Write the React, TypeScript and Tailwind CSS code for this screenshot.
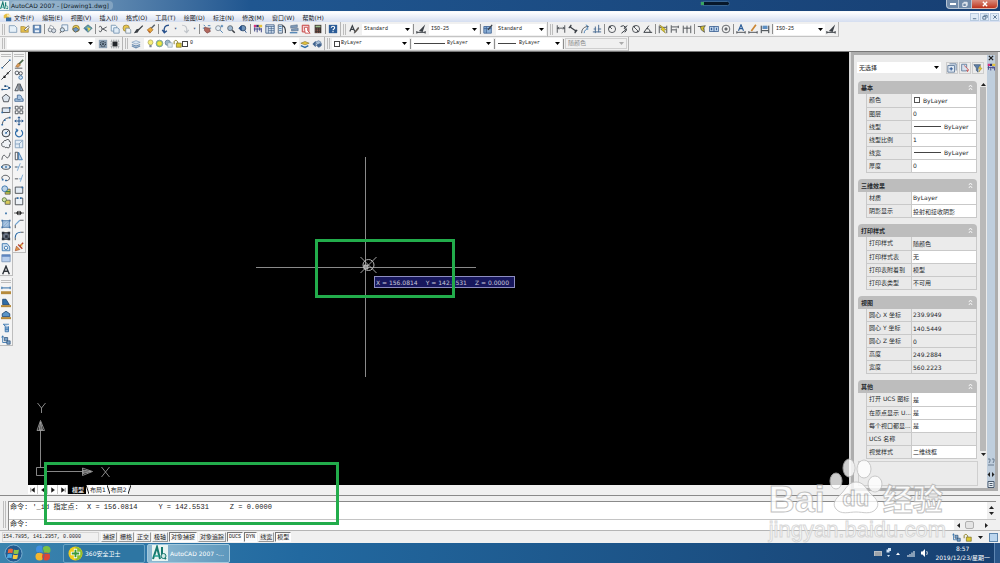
import React from 'react';

const ink = '#3a3f45';
const blue = '#2f6da8';

// All toolbar glyphs are drawn on a 12 x 12 grid
const icons: Record<string, React.ReactNode> = {
  new: <path d="M1.5 2h6.500l2.500 2.500V10h-9z" fill="#e6f0f8" stroke="#7a98b4" />,
  open: <><path d="M1 3h4l1 1h4v6H1z" fill="#e3bd4c" stroke="#9a7d30" strokeWidth=".7" /><path d="M5 7l5-5 1 2-4 4z" fill="#fff" stroke={ink} strokeWidth=".7" /></>,
  save: <><path d="M1.500 1.500h9v9h-9z" fill="#6d93c0" stroke="#41648f" /><path d="M3.500 2h5v3h-5zM3.500 7.500h5V10h-5z" fill="#eef4fa" /></>,
  print: <><circle cx="4" cy="7" r="2.500" fill="#e4e7ec" stroke="#68727f" /><circle cx="8" cy="8" r="2.500" fill="#d4dbe4" stroke="#68727f" /><path d="M4 1.500l4 2-1 3-4-2z" fill="#fff" stroke="#68727f" strokeWidth=".7" /></>,
  preview: <><path d="M3.500 1h7v7h-7z" fill="#eaf2fa" stroke="#6f8dab" /><circle cx="4" cy="7" r="2.500" fill="#cfe2f2" stroke={ink} strokeWidth=".8" /><path d="M2.500 9L1 11" stroke={ink} /></>,
  publish: <><circle cx="6" cy="5.500" r="4" fill="#e8c955" stroke="#7f6a24" strokeWidth=".8" /><path d="M2 6l3 4 5-3-4-3z" fill="#6f98c2" stroke={ink} strokeWidth=".6" /></>,
  dwf: <><path d="M1 5l5-4 5 4-5 5z" fill="#63a3a8" stroke="#37607a" strokeWidth=".8" /><path d="M5 4l4 1-2 4z" fill="#ead34f" /><path d="M2 5l3 1-1 2z" fill="#3565a5" /></>,
  cut: <path d="M10.500 3.500L4 7M10.500 8.500L4 5M4 7a1.400 1.400 0 1 1-2.500 1M4 5a1.400 1.400 0 1 0-2.500-1" fill="none" stroke={ink} />,
  copy: <><path d="M1.500 1.500h5l1.500 1.500v5.500H1.500z" fill="#eef5fb" stroke="#7191b0" /><path d="M4.500 4.500h4.500l2 1.500V11H4.500z" fill="#e0ecf6" stroke="#7191b0" /></>,
  paste: <><circle cx="5" cy="5" r="3.800" fill="#e9c64d" stroke="#8c7630" strokeWidth=".8" /><path d="M4.500 5h4l2 2v4h-6z" fill="#eef4f9" stroke="#65788b" strokeWidth=".8" /></>,
  brush: <path d="M10.500 2L5 7.500M5.500 6.500L4 9.500 1.500 10l2-3z" fill={ink} stroke={ink} strokeWidth="1.500" />,
  block: <><path d="M10.500 1L6 5.500" stroke="#57606b" strokeWidth="1.600" /><path d="M1.500 7l4-3 3 3-4 4z" fill="#e7a53a" stroke="#8c5b1d" strokeWidth=".7" /><path d="M3 8l2 2" stroke="#b53a2a" /></>,
  undo: <path d="M9.500 1.500C5 1.500 3 4 4 10M1.500 7l2.500 3.500L7 8" fill="none" stroke="#27508c" strokeWidth="1.600" />,
  redo: <path d="M2.500 1.500C7 1.500 9 4 8 10M10.500 7L8 10.500 5 8" fill="none" stroke="#bfc3c8" strokeWidth="1.300" />,
  pan: <><path d="M2 1l2 2M1 5h2M7 2h3M9 5h2" stroke={blue} /><path d="M3 4l6 1 1 4-4 2-3-3z" fill="#b1685e" stroke="#713c3c" strokeWidth=".7" /></>,
  zoomRt: <><circle cx="5" cy="5" r="3" fill="#e4edf5" stroke="#7b8794" /><path d="M7.500 7.500L10.500 10.500M8 2.500h3M9.500 1v3" stroke={blue} /></>,
  zoomWin: <><circle cx="5" cy="5" r="3" fill="#9fb9d3" stroke="#59646f" /><path d="M7.500 7.500l3 3" stroke={ink} strokeWidth="1.800" /></>,
  zoomPrev: <><circle cx="6" cy="5" r="3.300" fill="#6f93b9" stroke="#354c68" /><path d="M8 7.500l2 3M1 5l3-3v6z" fill="#27508c" stroke="#27508c" /></>,
  props: <><path d="M1 1h3v3H1z" fill="#d8317e" /><path d="M4 1h3v3H4z" fill="#2b2f6b" /><path d="M7 1h4v3H7z" fill="#e4c43c" /><path d="M2 4v5M5 5v5M8 4v4M10 5v5M1 6h9" stroke="#474c8a" strokeWidth="1.200" /></>,
  design: <><path d="M1 1h10v10H1z" fill="#dbe7f4" stroke="#3d5d86" /><path d="M1 3h10M4 3v8M7.500 3v8M4 5.500h7M4 8h7" stroke="#3d5d86" strokeWidth=".8" /></>,
  tools: <><path d="M1.500 1h5v10h-5z" fill="#e6eef6" stroke="#44546a" /><path d="M2.500 3h3M2.500 5.500h3M2.500 8h3" stroke={blue} /><path d="M6.500 2c3 1 4 4 3.500 9" fill="none" stroke={ink} strokeWidth="1.400" /></>,
  sheets: <><path d="M2 2l8-1v3L2 5zM3 6l8-1v3L3 8.500z" fill="#7f99b7" stroke="#4c6481" strokeWidth=".6" /><path d="M1 10.500h9" stroke={blue} strokeWidth="1.300" /></>,
  markup: <><path d="M1.500 1.500h8v8h-8z" fill="#f3d6d6" stroke="#c64343" strokeWidth="1.200" /><path d="M4 4h4v4l3 3H5z" fill="#fff" stroke="#c64343" /></>,
  calc: <><path d="M2 1h8v10H2z" fill="#3b3330" /><path d="M3 2h6v2H3z" fill="#9fbf8b" /><path d="M3 6h6M3 8h6M3 10h6" stroke="#b86c5a" strokeDasharray="1 1" /></>,
  help: <><path d="M1 1h10v10H1z" fill="#2b5c97" /><path d="M4 4.500C4 2 8 2 8 4.500 8 6 6 6 6 7.500M6 8.500v1.500" fill="none" stroke="#fff" strokeWidth="1.300" /></>,
  textStyle: <><path d="M1 9L4 2l3 7M2 6.500h4" fill="none" stroke={ink} strokeWidth="1.400" /><path d="M11 4l-4 5-1 2 2-1 4-5z" fill="#6b5a49" stroke={ink} strokeWidth=".6" /></>,
  dimStyle: <><path d="M1 10h10M1 8.500v3M11 8.500v3" stroke={ink} strokeWidth="1.200" /><path d="M11 .5L3.500 8.500 8 9.500z" fill={ink} /></>,
  tableStyle: <><path d="M1 3h9v8H1z" fill="#8fb2d8" stroke="#3f6394" /><path d="M1 5.500h9M4 3v8" stroke="#3f6394" /><path d="M11 1L6 7" stroke={ink} strokeWidth="1.500" /></>,
  dimLin: <path d="M1.500 1.500v9M10.500 1.500v9M2 5h8M3.500 3.500L2 5l1.500 1.500M8.500 3.500L10 5 8.500 6.500" fill="none" stroke={ink} />,
  dimAlign: <path d="M2.500 3.500l7 5M1 5l3-4M8 11l3-4M3 2l1 3M8 9l2-2" fill="none" stroke={ink} strokeWidth="1.400" />,
  dimArc: <><path d="M2 11C2 6 5 3 10 3" fill="none" stroke={ink} /><path d="M5 11c0-3 2-5 5-5M7 1l3 2-2 3" fill="none" stroke={blue} /></>,
  dimOrd: <path d="M1 9.500h10M2 6h3M7 6h4M4 3v8M8 1v9" fill="none" stroke="#4f6f95" strokeWidth="1.200" />,
  radius: <><circle cx="6" cy="6" r="4.300" fill="none" stroke={ink} /><path d="M6 6L3 3M3 3h2M3 3v2" stroke={ink} /></>,
  jogged: <path d="M2 3a4 4 0 1 1 5 7M10 2L6 5l2 2-5 4" fill="none" stroke={ink} strokeWidth="1.200" />,
  diameter: <><circle cx="6" cy="6" r="4.300" fill="none" stroke={ink} /><path d="M3 3l6 6M3 3h2M9 9H7" stroke={ink} /></>,
  angular: <path d="M11 10H1l6-8M4.500 5.500c3 0 4 2 4 4.500" fill="none" stroke={ink} strokeWidth="1.200" />,
  quick: <><path d="M1.500 2v9M10.500 2v9M2 4h8" stroke={ink} /><path d="M2 1l8 6-3 0 2 4-6-5 2 0z" fill="#e7d02c" stroke="#6e6210" strokeWidth=".5" /></>,
  baseline: <path d="M1.500 1.500v9M2 3.500h8M2 7h5M10 2v3M7.500 5.500v5" fill="none" stroke={ink} />,
  contin: <path d="M1.500 2v9M6 2v9M10.500 2v9M2 5h8" fill="none" stroke={ink} />,
  leader: <><path d="M1 3h4l4 3" fill="none" stroke={ink} /><path d="M4 3l6-1-2 3 1 5-4-3z" fill="#d7c02e" stroke={ink} strokeWidth=".8" /></>,
  tolerance: <><path d="M.5 3h11v6H.5z" fill="#bcd3ea" stroke="#3f6394" /><path d="M6 3v6M3 4.500v3M2 6h2M9 4.500v3" stroke="#27508c" /></>,
  center: <><circle cx="6" cy="6" r="4.600" fill="none" stroke={ink} strokeWidth=".9" /><path d="M6 4v4M4 6h4" stroke={ink} strokeWidth="1.200" /></>,
  dimEdit: <><path d="M1 10h10M1 8.500v3M11 8.500v3" stroke={ink} /><path d="M3 8l3-7 3 7M4.500 5.500h3" fill="none" stroke="#2b5c97" strokeWidth="1.400" /></>,
  dimText: <><path d="M1 10h10M1 8.500v3M11 8.500v3" stroke={ink} /><path d="M9.500 1L4 8.500" stroke="#cb8531" strokeWidth="2" /></>,
  dimUpd: <><path d="M1.500 2v9M10.500 2v9M2 8h8" stroke={ink} strokeWidth="1.200" /><path d="M3 2h6v4H3z" fill="#5e8fc2" /></>,
  gear: <><path d="M1 1h10v10H1z" fill="#8fa2b5" /><circle cx="6" cy="6" r="3" fill="none" stroke="#2d3a48" strokeWidth="1.500" strokeDasharray="1.200 .8" /><circle cx="6" cy="6" r="1.200" fill="#2d3a48" /></>,
  chip: <><path d="M3 3h6v6H3z" fill="#22262b" /><path d="M1.500 1.500h9v9h-9z" fill="none" stroke="#6c737b" strokeDasharray="1 1" /></>,
  layers: <><path d="M1 4l5-2 5 2-5 2z" fill="#dce8f4" stroke="#6e8fb3" strokeWidth=".7" /><path d="M1 6.500l5 2 5-2M1 8.500l5 2 5-2" fill="none" stroke="#6e8fb3" strokeWidth="1.400" /></>,
  layerCur: <><path d="M1 5l5-2 5 2-5 2z" fill="#e4c43c" stroke="#7f6a24" strokeWidth=".7" /><path d="M1 8l5 2 4-2" fill="none" stroke={blue} strokeWidth="1.800" /></>,
  layerPrev: <><path d="M4 4l4-2 3 2-4 3z" fill="#a9bfd6" stroke="#41648f" strokeWidth=".7" /><path d="M5 7l3 3 3-2V5M1 6l3-3v6z" fill="#41648f" stroke="#41648f" /></>,
  bulb: <><circle cx="6" cy="4.500" r="3.300" fill="#f7ee7a" stroke="#9b9440" strokeWidth=".8" /><path d="M4.500 8h3v3h-3z" fill="#7f8790" /></>,
  sun: <><circle cx="6" cy="6" r="4.500" fill="#a9c95a" stroke="#6f94a8" /><circle cx="6" cy="6" r="2.800" fill="#f5e33c" /></>,
  freeze: <><circle cx="5" cy="5" r="3.500" fill="#9cb7c8" stroke="#5d7c91" /><path d="M5 5h6v6H5z" fill="#dfe9ef" stroke="#7b95a6" strokeWidth=".7" /></>,
  lock: <><path d="M4.500 5.500h6.500v5.500H4.500z" fill="#dcc934" stroke="#6b6018" strokeWidth=".8" /><path d="M6.500 5.500C6.500 1 1.500 1 1.500 4v3" fill="none" stroke="#8b8024" strokeWidth="1.300" /></>,

  line: <><path d="M1.500 10.500l9-9" stroke={ink} /><path d="M.5 9.500h2v2h-2zM9.500.5h2v2h-2z" fill={blue} /></>,
  xline: <><path d="M.5 11.500l11-11" stroke={ink} strokeWidth="1.200" /><path d="M3 7h2.500v2.500H3zM7 3h2v2H7z" fill="#222" /></>,
  pline: <><path d="M1 9h6c3 0 3-4 0-4H5" fill="none" stroke={blue} strokeWidth="1.200" /><path d="M.5 8h2v2h-2zM4 4h2v2H4zM9 6h2v2H9z" fill="#24486f" /></>,
  polygon: <path d="M6 1.500l4.500 3.500-1.700 5.500H3.200L1.500 5z" fill="#dce4ec" stroke={ink} />,
  rect: <><path d="M1.500 3.500h9v5.500h-9z" fill="#dce7f3" stroke={ink} /><path d="M.5 8h2v2h-2zM9.500 2.500h2v2h-2z" fill={blue} /></>,
  arc: <><path d="M1.500 10.500C2 5 5 2.500 10.500 2" fill="none" stroke={ink} /><path d="M.5 9.500h2v2h-2zM3.500 4h2v2h-2zM9.500 1h2v2h-2z" fill={blue} /></>,
  circle: <><circle cx="6" cy="6" r="4.700" fill="#e6edf4" stroke={ink} strokeWidth="1.200" /><path d="M6 6l3-3" stroke={ink} /><path d="M5 5h2v2H5z" fill={blue} /></>,
  cloud: <path d="M3 4a2 2 0 0 1 3-2 2 2 0 0 1 4 1 2 2 0 0 1 0 4 2 2 0 0 1-3 3 2 2 0 0 1-3-1 2 2 0 0 1-3-2 2 2 0 0 1 2-3z" fill="#f1f4f7" stroke={ink} />,
  spline: <path d="M1 10.500C2 4 4 4 6 7s4 0 5-5" fill="none" stroke={ink} />,
  ellipse: <><ellipse cx="6" cy="6" rx="5" ry="2.800" fill="#dbe6f0" stroke={ink} /><path d="M5 5h2v2H5zM0 5h2v2H0zM10 5h2v2h-2z" fill={blue} /></>,
  ellArc: <><path d="M2 8C-1 4 4 2 7 3s5 4 1 6H5" fill="none" stroke={ink} /><path d="M1 7h2v2H1zM5 8h2v2H5z" fill={blue} /></>,
  insert: <><path d="M5 5h6v6H5z" fill="#d3c84b" stroke={ink} strokeWidth=".8" /><circle cx="4.500" cy="4.500" r="3.500" fill="#bcd3e6" stroke={blue} /><path d="M6 8h5" stroke="#3b7f46" strokeWidth="1.500" /></>,
  make: <><path d="M5 5h6v5H5z" fill="#d8c95a" stroke={ink} strokeWidth=".8" /><circle cx="4" cy="4.500" r="2.500" fill="#cfe0a0" stroke="#54743b" /></>,
  point: <path d="M5 5.500h2v2H5z" fill={blue} />,
  hatch: <><path d="M2 2h8v8H2z" fill="#a9c4e0" stroke="#4673a5" /><path d="M2 6l4-4M2 10l8-8M6 10l4-4" stroke="#86abd2" /><path d="M.5 1h2v2h-2zM9.500 1h2v2h-2zM.5 9h2v2h-2zM9.500 9h2v2h-2z" fill="#4673a5" /></>,
  gradient: <><path d="M2 2h8v8H2z" fill="#6c7789" stroke="#222" /><path d="M1 1h3v3H1zM8 1h3v3H8zM1 8h3v3H1zM8 8h3v3H8zM5 5h3v3H5z" fill="#272d38" /></>,
  region: <><path d="M1.500 2h6l3 4v4.500h-9z" fill="#cfe0ef" stroke={blue} /><circle cx="6" cy="7" r="2" fill="#fff" stroke={blue} /></>,
  table: <><path d="M1 2h10v8.500H1z" fill="#b6cdec" stroke="#7c96b8" /><path d="M1 2h10v2.500H1z" fill="#5d84bf" /></>,
  mtext: <path d="M2 11L6 1.500 10 11M3.500 7.500h5" fill="none" stroke="#30343a" strokeWidth="1.700" />,

  erase: <><path d="M11 1L5 7" stroke="#4e6a4a" strokeWidth="2" /><path d="M1 11h9" stroke={ink} /><path d="M2 9l3-4 3 2-3 3z" fill="#d99b56" stroke="#8b5424" strokeWidth=".6" /></>,
  dup: <><circle cx="3.500" cy="3.500" r="2.200" fill="#eef2f6" stroke={ink} /><circle cx="8" cy="4" r="2" fill="none" stroke={ink} /><circle cx="8" cy="9" r="2.200" fill="#cfe0ef" stroke={blue} /></>,
  mirror: <><path d="M5 2v8.500H1z" fill="#c6cfd9" stroke={ink} /><path d="M7 2v8.500h4z" fill="#8aa6c4" stroke={ink} /></>,
  offset: <path d="M1 10V7h3V2.500h3C9 3 9.500 5 9.500 7H11v3zM4 8h4" fill="#a9c4e0" stroke="#466a94" />,
  array: <path d="M1.500 1.500h3.500v3.500H1.500zM7 1.500h3.500v3.500H7zM1.500 7h3.500v3.500H1.500zM7 7h3.500v3.500H7z" fill="#fff" stroke={ink} />,
  move: <path d="M6 1v10M1 6h10M4.500 2.500L6 1l1.500 1.500M4.500 9.500L6 11l1.500-1.500M2.500 4.500L1 6l1.500 1.500M9.500 4.500L11 6 9.500 7.500" fill="none" stroke="#27568c" strokeWidth="1.200" />,
  rotate: <path d="M4 2.500a4.300 4.300 0 1 0 4.500.2M2 1l2.500 1.500L3 5" fill="none" stroke={blue} strokeWidth="1.400" />,
  scale: <path d="M1.500 1.500h9v9h-9zM1.500 6h5v4.500M6 6l4-4" fill="#e3edf6" stroke="#7f9dbb" />,
  stretch: <><path d="M1.500 1.500h3v9h-3z" fill="#f4f6f9" stroke={ink} /><path d="M5.500 1.500L10 10.500H5.500z" fill="#c4d6e8" stroke={blue} /></>,
  trim: <><path d="M1 6h3M8 6h3" stroke={ink} /><path d="M4 10.500L7.500 1.500M3 6h3" stroke="#6c9fcd" /></>,
  extend: <><path d="M1 7h4" stroke={ink} /><path d="M6 7h3M7.500 10.500L10.500 2" stroke="#6c9fcd" /></>,
  breakPt: <><path d="M1.500 2.500h9v7.500h-9z" fill="#e3ebf3" stroke={ink} /><path d="M9 2h2v2H9z" fill={blue} /></>,
  brk: <><path d="M4 2.500H1.500v8h9v-8H8" fill="#edf2f7" stroke={ink} /><path d="M3.500 1.500h2v2h-2zM7 1.500h2v2H7z" fill={blue} /></>,
  join: <path d="M0 6h12M5 3.500v5L3 6zM7 3.500v5L9 6z" fill="#222" stroke="#222" strokeWidth=".8" />,
  chamfer: <><path d="M1.500 11V7M7 1.500h4.500" stroke={ink} /><path d="M1.500 7L7 1.500" stroke="#6c9fcd" strokeWidth="1.300" /></>,
  fillet: <><path d="M1.500 11V8M8 1.500h3.500" stroke={ink} /><path d="M1.500 8C1.500 4 4 1.500 8 1.500" fill="none" stroke={blue} strokeWidth="1.400" /></>,
  explode: <><path d="M1.500 10.500L3 5l4 4z" fill="#e59a4b" stroke="#a04a2a" strokeWidth=".8" /><path d="M7 5l4-4M5 3l5 5" stroke="#b5442f" strokeWidth="1.700" /><path d="M7 3h3v3z" fill="#e9c64d" /></>,

  dist: <><path d="M1 3.500h10M1 2v3M11 2v3" stroke={blue} strokeWidth="1.200" /><path d="M0 7.500h12V11H0z" fill="#b68a3c" /></>,
  area: <><path d="M2 8V1.500h4l4 6.500z" fill="#2f6da8" stroke="#1d456f" /><path d="M0 8.500h12V11H0z" fill="#b68a3c" /></>,
  mass: <><path d="M1.500 8V4.500L6 1.500l4.500 3V8z" fill="#5b95c8" stroke="#1d456f" /><path d="M0 8.500h12V11H0z" fill="#b68a3c" /></>,
  list: <><path d="M2.500 1.500h7M3 1.500L5 4v6.500h4V4" fill="#a9c4e0" stroke={blue} /><path d="M5 6h4M5 8h4" stroke={blue} /></>,
  locate: <><path d="M2 1v8h8M2 1L.8 3M2 1l1.200 2" fill="none" stroke={blue} /><path d="M4 3h4v4H4zM7 7h4v4H7z" fill="#7ea5cb" stroke="#24486f" strokeWidth=".8" /></>,

  pickAdd: <><path d="M1 3h8v8H1zM3 1h8v8" fill="#dfe9f4" stroke="#5c7696" /><path d="M5 5v4M3 7h4" stroke="#27508c" strokeWidth="1.200" /></>,
  selObj: <><path d="M2 1.500h6v8H2z" fill="#d5e0ed" stroke="#5c7696" /><path d="M5 3l5.500 5.500-2.200.2 1 2" fill="#fff" stroke="#c23b3b" /></>,
  quickSel: <><path d="M1 2h8L6 6v5L4 9V6z" fill="#5d7fa8" stroke="#3c536f" strokeWidth=".8" /><path d="M9 3L6.500 7h2L7 11l4-5H9z" fill="#f0cb35" stroke="#8a741d" strokeWidth=".4" /></>,
};

const Icon = ({ name, size = 'size-[11px]' }: { name: string; size?: string }) => (
  <svg viewBox="0 0 12 12" className={`${size} shrink-0`}>{icons[name]}</svg>
);

const Tool = ({ name }: { name: string }) => (
  <button aria-label={name} className="flex h-3 w-3 shrink-0 items-center justify-center">
    <Icon name={name} size="size-[10px]" />
  </button>
);

// '|' is a separator, '>' the small arrow beside undo and redo
const Tools = ({ items }: { items: string[] }) => (
  <>
    {items.map((item, i) => {
      if (item === '|') return <span key={i} className="mx-px h-[10px] w-px shrink-0 bg-[#8e8e8e]" />;
      if (item === '>') return <span key={i} className="w-[7px] shrink-0 text-center text-[5px] leading-[5px] text-[#39537d]">▾</span>;
      return <Tool key={i} name={item} />;
    })}
  </>
);

const Strip = ({ children }: { children: React.ReactNode }) => (
  <div className="flex h-full shrink-0 items-center border-r border-b border-[#c4c4c4] border-r-[#b5b5b5] pr-px pl-0.5">
    <span className="mr-0.5 h-[11px] w-[3px] shrink-0 border-x border-[#bdbdbd]" />
    {children}
  </div>
);

const Caret = ({ className = '' }: { className?: string }) => (
  <svg viewBox="0 0 5 3" className={`h-[3px] w-[5px] ${className}`}><path d="M0 0h5L2.500 3z" fill="currentColor" /></svg>
);

interface ComboProps {
  label: string;
  value: string;
  className: string;
  pad?: string;
  disabled?: boolean;
  children?: React.ReactNode;
}

const Combo = ({ label, value, className, pad = 'pl-0.5', disabled, children }: ComboProps) => (
  <label className={`relative flex h-[11px] shrink-0 items-center ${disabled ? 'border border-[#cfcfcf] bg-[#f0f0f0] text-[#8a8a8a]' : 'bg-white text-[#222]'} ${className}`}>
    <span className="absolute inset-y-0 left-0.5 flex items-center">{children}</span>
    <select aria-label={label} disabled={disabled} className={`w-full appearance-none bg-transparent leading-[11px] outline-none ${pad}`}>
      <option>{value}</option>
    </select>
    <Caret className={`pointer-events-none absolute right-0.5 ${disabled ? 'text-[#aaa]' : 'text-black'}`} />
  </label>
);

const Square = () => <span className="size-[6px] border border-[#444] bg-white" />;

const menus = ['文件(F)', '编辑(E)', '视图(V)', '插入(I)', '格式(O)', '工具(T)', '绘图(D)', '标注(N)', '修改(M)', '窗口(W)', '帮助(H)'];

const Logo = ({ className }: { className: string }) => (
  <svg viewBox="0 0 16 16" className={className}>
    <path d="M0 0h16v16H0z" fill="#e8f4f2" />
    <path d="M1 14L5 2l3 12M10 2v9l4 3" fill="none" stroke="#16796f" strokeWidth="2" />
    <path d="M2 11h5" stroke="#2aa394" strokeWidth="1.500" />
    <circle cx="11.500" cy="11" r="2.500" fill="#cfe9e5" stroke="#16796f" />
  </svg>
);

const TitleBar = () => (
  <header className="relative flex h-[11px] shrink-0 items-center bg-linear-to-r from-[#8fb0c8] via-[#1f5690] via-25% to-[#173f73]">
    <Logo className="mr-0.5 size-[9px]" />
    <h1 className="rounded bg-[#b9cddc]/40 pr-1 text-[6px] leading-[9px] text-[#101c28]">AutoCAD 2007 - [Drawing1.dwg]</h1>
    <div className="absolute top-px left-[70%] h-[5px] w-[30px] rounded-sm border border-[#36628f] bg-[#07182b]">
      <span className="block h-[3px] w-[3px] bg-[#37a562]" />
    </div>
    <div className="ml-auto flex h-[9px] self-start pr-0.5 text-white">
      <button aria-label="最小化" className="flex w-[13px] items-center justify-center rounded-bl-sm border border-t-0 border-[#b7c4d3] bg-[#6f89a8]">
        <span className="h-0.5 w-[6px] bg-white" />
      </button>
      <button aria-label="还原" className="flex w-[13px] items-center justify-center border-r border-b border-[#b7c4d3] bg-[#6f89a8]">
        <svg viewBox="0 0 7 7" className="size-[6px]"><path d="M2 1.500h4v4M1 2.500h4v4H1z" fill="none" stroke="#fff" /></svg>
      </button>
      <button aria-label="关闭" className="flex w-[26px] items-center justify-center rounded-br-sm border-r border-b border-[#dcb3a8] bg-linear-to-b from-[#d98b7c] to-[#bd3119]">
        <svg viewBox="0 0 7 7" className="size-[6px]"><path d="M1 1l5 5M6 1L1 6" stroke="#fff" strokeWidth="1.600" /></svg>
      </button>
    </div>
  </header>
);

const MenuBar = () => (
  <nav className="flex h-[11px] shrink-0 items-center border-t border-[#f8fafc] bg-linear-to-b from-white to-[#d5def0] pl-[3px] text-[6px] text-[#15181c]">
    <svg viewBox="0 0 12 12" className="mr-0.5 size-[9px]">
      <path d="M1 3l3-2h4v6H1z" fill="#e7c046" /><path d="M4 6h7v5H4z" fill="#356ba5" /><path d="M5 2h4l2 3H6z" fill="#f6e9b1" />
    </svg>
    <div className="flex gap-2">
      {menus.map((m) => <button key={m} className="leading-[9px] whitespace-nowrap">{m}</button>)}
    </div>
    <div className="ml-auto flex gap-px pr-px">
      {['M1 5.500h4', 'M2 1.500h4v3M1 3h3.500v3H1z', 'M1.500 1.500l4 4M5.500 1.500l-4 4'].map((d) => (
        <button key={d} aria-label="文档窗口" className="flex h-[8px] w-[9px] items-center justify-center border border-[#b8cbe0] bg-[#dfebf7]">
          <svg viewBox="0 0 7 7" className="size-[6px]"><path d={d} fill="none" stroke="#486684" /></svg>
        </button>
      ))}
    </div>
  </nav>
);

const Toolbars = () => (
  <div className="shrink-0 border-b border-[#777] bg-[#f0f0f0] font-['Liberation_Mono','Noto_Sans_CJK_SC',monospace] text-[5px]">
    <div className="flex h-[15px] items-center">
      <Strip>
        <Tools items={['new', 'open', 'save', '|', 'print', 'preview', 'publish', 'dwf', '|', 'cut', 'copy', 'paste', 'brush', 'block', '|', 'undo', '>', 'redo', '>', '|', 'pan', 'zoomRt', 'zoomWin', 'zoomPrev', '|', 'props', 'design', 'tools', 'sheets', 'markup', 'calc', '|', 'help']} />
      </Strip>
      <Strip>
        <Tool name="textStyle" />
        <Combo label="文字样式" value="Standard" className="ml-0.5 w-[50px]" />
        <Tools items={['|', 'dimStyle']} />
        <Combo label="标注样式" value="ISO-25" className="ml-0.5 w-[50px]" />
        <Tools items={['|', 'tableStyle']} />
        <Combo label="表格样式" value="Standard" className="ml-0.5 w-[50px]" />
      </Strip>
      <Strip>
        <Tools items={['dimLin', 'dimAlign', 'dimArc', 'dimOrd', '|', 'radius', 'jogged', 'diameter', 'angular', '|', 'quick', 'baseline', 'contin', '|', 'leader', 'tolerance', 'center', '|', 'dimEdit', 'dimText', 'dimUpd', '|']} />
        <Combo label="当前标注样式" value="ISO-25" className="w-[51px]" />
        <Tool name="dimStyle" />
      </Strip>
    </div>
    <div className="flex h-[14px] items-center">
      <Strip>
        <Combo label="工作空间" value="" className="mr-0.5 w-[88px]" />
        <Tools items={['gear', 'chip']} />
      </Strip>
      <Strip>
        <Tool name="layers" />
        <Combo label="图层" value="0" className="ml-0.5 w-[155px]" pad="pl-[46px]">
          <span className="flex items-center">
            {['bulb', 'sun', 'freeze', 'lock'].map((n) => <Icon key={n} name={n} size="size-[9px]" />)}
            <Square />
          </span>
        </Combo>
        <Tools items={['layerCur', 'layerPrev']} />
      </Strip>
      <Strip>
        <Combo label="颜色" value="ByLayer" className="w-[77px]" pad="pl-[9px]"><Square /></Combo>
        <Tools items={['|']} />
        <Combo label="线型" value="ByLayer" className="w-[81px]" pad="pl-[35px]"><span className="h-px w-[31px] bg-[#444]" /></Combo>
        <Tools items={['|']} />
        <Combo label="线宽" value="ByLayer" className="w-[66px]" pad="pl-[23px]"><span className="h-px w-[18px] bg-[#444]" /></Combo>
        <Tools items={['|']} />
        <Combo label="打印样式" value="随颜色" className="w-[62px] text-[6px]" disabled />
      </Strip>
    </div>
  </div>
);

const draw = ['line', 'xline', 'pline', 'polygon', 'rect', 'arc', 'circle', 'cloud', 'spline', 'ellipse', 'ellArc', 'insert', 'make', 'point', 'hatch', 'gradient', 'region', 'table', 'mtext'];
const modify = ['erase', 'dup', 'mirror', 'offset', 'array', 'move', 'rotate', 'scale', 'stretch', 'trim', 'extend', 'breakPt', 'brk', 'join', 'chamfer', 'fillet', 'explode'];

const Palette = ({ items, className }: { items: string[]; className: string }) => (
  <div className="w-[13px] border-r border-b border-[#bdbdbd] bg-[#f4f4f4] pt-0.5">
    <div className="mx-px mb-0.5 h-[3px] border-y border-[#bdbdbd]" />
    <div className={`flex flex-col items-center justify-between ${className}`}>
      {items.map((n) => <button key={n} aria-label={n}><Icon name={n} size="block size-[10px]" /></button>)}
    </div>
  </div>
);

const SideTools = () => (
  <aside className="flex w-7 shrink-0 items-start">
    <div className="flex flex-col gap-0.5">
      <Palette items={draw} className="h-[216px]" />
      <Palette items={['dist', 'area', 'mass', 'list', 'locate']} className="h-[60px]" />
    </div>
    <Palette items={modify} className="h-[193px]" />
  </aside>
);

const Canvas = () => (
  <section className="relative min-h-0 flex-1 overflow-hidden bg-black">
    <svg viewBox="0 0 220 220" className="absolute top-[105px] left-[228px] size-[220px]" fill="none" stroke="#8a8a8a">
      <path d="M109.500 0v220M0 110.500h220" />
      <path d="M104.500 100l16 16M120.500 100l-16 16" stroke="#b5b5b5" strokeWidth=".9" />
      <circle cx="112.500" cy="108" r="5.500" stroke="#b5b5b5" />
      <path d="M108 108h4v4h-4z" fill="#999" stroke="#cfcfcf" strokeWidth=".7" />
    </svg>
    <div className="absolute top-[224px] left-[346px] flex h-3 w-[141px] items-center justify-between border border-[#8d8dc0] bg-[#17175c] pr-[5px] pl-px text-[6px] whitespace-nowrap text-[#c9c9da]">
      <span>X = 156.0814</span><span>Y = 142.5531</span><span>Z = 0.0000</span>
    </div>
    <div className="absolute top-[187px] left-[287px] h-[59px] w-[140px] border-3 border-[#22ac4b]" />
    <svg viewBox="0 0 78 76" className="absolute bottom-[8px] left-[8px] h-[76px] w-[78px]" fill="none" stroke="#a8a8a8" strokeWidth=".8">
      <path d="M.5 66.500h8v8h-8zM4.500 66.500v-37M8.500 70.500h38M1 29.500l3.500-10 4 10zM46.500 67l10 3.500-10 4z" />
      <path d="M3 29l1.500-8 2 8zM47 69l8 1.500-8 2z" fill="#666" />
      <path d="M1.500 2l4 5 4-5M5.500 7v5M65.500 66l8 10M73.500 66l-8 10" />
    </svg>
  </section>
);

const LayoutTabs = () => (
  <div className="flex h-[9px] shrink-0 items-center bg-[#f0f0f0] text-[6px] leading-[8px] text-[#222]">
    {['M1 1v6M6 1v6L2 4z', 'M6 1v6L2 4z', 'M2 1v6l4-3z', 'M7 1v6M2 1v6l4-3z'].map((d) => (
      <button key={d} aria-label="布局切换" className="flex h-full w-[10px] items-center justify-center border-r border-[#c8c8c8] bg-white">
        <svg viewBox="0 0 8 8" className="size-[6px]"><path d={d} fill="#111" stroke="#111" strokeWidth=".6" /></svg>
      </button>
    ))}
    <button className="flex h-full items-center bg-black pr-0.5 pl-1 font-bold text-[#ddd]">模型</button>
    {['布局1', '布局2'].map((t) => (
      <React.Fragment key={t}>
        <svg viewBox="0 0 3 9" className="h-[9px] w-[3px]"><path d="M0 0l3 9" stroke="#222" /></svg>
        <button className="h-full bg-white px-px">{t}</button>
      </React.Fragment>
    ))}
    <svg viewBox="0 0 3 9" className="h-[9px] w-[3px]"><path d="M3 0L0 9" stroke="#222" /></svg>
  </div>
);

type Row = { name: string; value: string; locked?: boolean; mark?: 'swatch' | 'line' };

const groups: { title: string; rows: Row[] }[] = [
  {
    title: '基本',
    rows: [
      { name: '颜色', value: 'ByLayer', mark: 'swatch' },
      { name: '图层', value: '0' },
      { name: '线型', value: 'ByLayer', mark: 'line' },
      { name: '线型比例', value: '1' },
      { name: '线宽', value: 'ByLayer', mark: 'line' },
      { name: '厚度', value: '0' },
    ],
  },
  { title: '三维效果', rows: [{ name: '材质', value: 'ByLayer' }, { name: '阴影显示', value: '投射和接收阴影' }] },
  {
    title: '打印样式',
    rows: [
      { name: '打印样式', value: '随颜色', locked: true },
      { name: '打印样式表', value: '无' },
      { name: '打印表附着到', value: '模型', locked: true },
      { name: '打印表类型', value: '不可用', locked: true },
    ],
  },
  {
    title: '视图',
    rows: [
      { name: '圆心 X 坐标', value: '239.9949', locked: true },
      { name: '圆心 Y 坐标', value: '140.5449', locked: true },
      { name: '圆心 Z 坐标', value: '0', locked: true },
      { name: '高度', value: '249.2884', locked: true },
      { name: '宽度', value: '560.2223', locked: true },
    ],
  },
  {
    title: '其他',
    rows: [
      { name: '打开 UCS 图标', value: '是' },
      { name: '在原点显示 U...', value: '是' },
      { name: '每个视口都显...', value: '是' },
      { name: 'UCS 名称', value: '', locked: true },
      { name: '视觉样式', value: '二维线框' },
    ],
  },
];

const Group = ({ title, rows }: { title: string; rows: Row[] }) => (
  <section>
    <h2 className="flex h-[13px] items-center justify-between rounded-t bg-[#bdbdbd] pr-1 pl-[3px] font-bold">
      {title}
      <svg viewBox="0 0 6 8" className="h-[7px] w-[5px]"><path d="M1 3.500L3 1l2 2.500M1 7l2-2.500L5 7" fill="none" stroke="#fff" /></svg>
    </h2>
    <table className="ml-2 w-[111px] table-fixed border-collapse">
      <tbody>
        {rows.map((r) => (
          <tr key={r.name} className="h-[13px] border-b border-[#c9c9c9]">
            <th scope="row" className="w-[45px] border-x border-[#c9c9c9] bg-[#e9e9e9] p-0 pb-px pl-0.5 text-left font-normal whitespace-nowrap">{r.name}</th>
            <td className={`border-r border-[#c9c9c9] p-0 pl-px ${r.locked ? 'bg-[#ebebeb]' : 'bg-white'}`}>
              <span className="flex items-center">
                {r.mark === 'swatch' && <span className="mr-[3px] ml-px size-[6px] border border-[#555]" />}
                {r.mark === 'line' && <span className="mr-[3px] ml-px h-px w-[27px] bg-[#444]" />}
                {r.value}
              </span>
            </td>
          </tr>
        ))}
      </tbody>
    </table>
  </section>
);

const Properties = () => (
  <aside className="mr-0.5 mb-1 flex w-[147px] shrink-0 border-3 border-[#adadad] bg-[#ebebeb] text-[6px] leading-[9px] text-[#26292d]">
    <div className="flex min-w-0 flex-1 flex-col pt-[6px] pr-px pb-0.5 pl-[3px]">
      <div className="flex h-[13px] items-center gap-px">
        <Combo label="对象" value="无选择" className="mr-1 w-[84px]" />
        {['pickAdd', 'selObj', 'quickSel'].map((n) => (
          <button key={n} aria-label={n} className="flex h-3 w-3 items-center justify-center border border-[#cdcdcd]"><Icon name={n} size="size-[10px]" /></button>
        ))}
      </div>
      <div className="mt-[7px] flex min-h-0 flex-1 justify-between">
        <div className="ml-px flex w-[119px] flex-col gap-[6px]">
          {groups.map((g) => <Group key={g.title} {...g} />)}
        </div>
        <div className="flex w-[6px] flex-col items-center justify-between bg-[#b9b9b9] text-[#222]">
          <span className="flex h-[6px] w-full items-center justify-center bg-[#ebebeb]"><Caret className="rotate-180" /></span>
          <span className="flex h-[6px] w-full items-center justify-center bg-[#ebebeb]"><Caret /></span>
        </div>
      </div>
      <div className="mt-1 ml-px h-[25px] w-[120px] shrink-0 border border-[#cfcfcf]" />
    </div>
    <div className="flex w-[8px] flex-col items-center bg-[#bfcedd]">
      <svg viewBox="0 0 7 7" className="size-[6px]"><path d="M1 1l5 5M6 1L1 6" stroke="#222" strokeWidth="1.500" /></svg>
      <span className="mt-0.5"><Icon name="props" size="block size-[9px]" /></span>
      <svg viewBox="0 0 8 32" className="mt-auto h-[32px] w-[8px]">
        <path d="M1 3h2v2L2 7M5 3h2v2L6 7M1 9h6" fill="none" stroke="#6a7c90" />
        <path d="M3 16v5l-2.500-2.500zM5 16v5l2.500-2.500z" fill="#222" />
        <path d="M1 25.500h6v6H1zM2.500 27.500h3M2.500 29.500h3" fill="#e6edf4" stroke="#4a5a6c" />
      </svg>
    </div>
  </aside>
);

const CommandLine = () => (
  <section className="flex h-[35px] shrink-0 border-t border-[#8a8a8a] bg-[#f0f0f0] pt-[5px] pr-1 pl-[3px] font-['Liberation_Mono','Noto_Sans_CJK_SC',monospace] text-[7px] leading-[9px] text-[#222]">
    <span className="mr-0.5 mb-0.5 w-[3px] border-x border-[#bdbdbd]" />
    <div className="flex min-w-0 flex-1 flex-col border-t border-l border-[#8a8a8a]">
      <div className="flex h-[18px] border-b border-[#c4c4c4] bg-white">
        <pre className="flex-1 pt-px pl-px font-[inherit]">{"命令: '_id 指定点:  X = 156.0814     Y = 142.5531     Z = 0.0000"}</pre>
        <div className="flex w-[9px] flex-col items-center justify-evenly bg-[#f0f0f0]"><Caret className="rotate-180" /><Caret /></div>
      </div>
      <div className="flex h-[10px] bg-white pl-px">
        <label htmlFor="cmd">命令:</label>
        <input id="cmd" className="min-w-0 flex-1 outline-none" />
        <div className="flex w-[42px] items-center gap-1 bg-[#f0f0f0] pl-0.5">
          <Caret className="rotate-90" />
          <span className="h-[8px] w-[9px] rounded-xs border border-[#b0b0b0] bg-[#e4e4e4]" />
          <Caret className="ml-1.5 -rotate-90" />
        </div>
      </div>
    </div>
  </section>
);

const modes = [
  { name: '捕捉' }, { name: '栅格' }, { name: '正交' }, { name: '极轴' },
  { name: '对象捕捉', on: true }, { name: '对象追踪' },
  { name: 'DUCS', on: true }, { name: 'DYN', on: true }, { name: '线宽' }, { name: '模型', on: true },
];

const StatusBar = () => (
  <div className="flex h-[13px] shrink-0 items-center border-t border-[#b5b5b5] bg-[#f0f0f0] pr-0.5 pl-0.5 text-[6px] text-[#1b1b1b]">
    <span className="h-[10px] w-[97px] border border-[#d5d5d5] font-['Liberation_Mono',monospace] text-[5px] leading-[9px]">154.7895, 141.2957, 0.0000</span>
    <div className="ml-0.5 flex gap-px">
      {modes.map((m) => (
        <button key={m.name} className={`h-[10px] border px-px leading-[8px] whitespace-nowrap ${/^D/.test(m.name) ? "font-['Liberation_Mono',monospace] text-[5px]" : ''} ${m.on ? 'border-[#777] border-r-white border-b-white bg-[#fafafa]' : 'border-[#fafafa] border-r-[#999] border-b-[#999]'}`}>
          {m.name}
        </button>
      ))}
    </div>
    <div className="ml-auto flex items-center gap-0.5">
      <Icon name="locate" size="size-[9px]" />
      <Icon name="lock" size="size-[9px]" />
      <Caret className="mx-1" />
      <span className="size-[9px] border border-[#5e86ad] bg-[#bcd6ee]" />
    </div>
  </div>
);

const Taskbar = () => (
  <footer className="flex h-5 shrink-0 items-center bg-linear-to-r from-[#3b84ae] via-[#2269a0] via-30% to-[#173f70] pr-0 pl-1 text-[6px] text-white">
    <button aria-label="开始">
      <svg viewBox="0 0 20 20" className="size-[19px]">
        <circle cx="10" cy="10" r="9" fill="#215a8f" stroke="#7fb2d3" />
        <path d="M4.500 5.500c2-1 3.500-1 5 0l-.6 4.300c-1.500-.8-3.500-.8-5 0z" fill="#e9653a" />
        <path d="M10.500 5.700c1.500.9 3.500.9 5.300 0l-.8 4.300c-1.500.8-3.500.8-5.100 0z" fill="#8cc549" />
        <path d="M3.700 10.800c1.500-.8 3.500-.8 5 0L8 15c-1.500-.8-3.500-.8-5 0z" fill="#4da7e0" />
        <path d="M9.700 11c1.500.8 3.500.8 5.100 0l-.8 4.300c-1.500.8-3.500.8-5 0z" fill="#f6c83a" />
      </svg>
    </button>
    <button aria-label="浏览器" className="ml-3">
      <svg viewBox="0 0 16 16" className="size-4">
        <circle cx="5" cy="4.500" r="4" fill="#3f8fe0" /><circle cx="11.500" cy="5" r="4" fill="#7ac143" />
        <circle cx="4.500" cy="11.500" r="4" fill="#f3b62d" /><circle cx="11" cy="11.500" r="4" fill="#df4637" />
        <path d="M8 1c-2 4 3 5 0 14M1 8c5-2 8 2 14 0" fill="none" stroke="#2f75a3" strokeWidth=".8" />
      </svg>
    </button>
    <button className="ml-3 flex h-[19px] w-[82px] items-center rounded-xs border border-[#6aa3c4] bg-[#2e76a3] pl-1">
      <svg viewBox="0 0 16 16" className="mr-0.5 size-[15px]"><circle cx="8" cy="8" r="7.500" fill="#f2ce1d" /><path d="M8 1a7 7 0 0 1 0 14" fill="#8bbf2c" /><path d="M8 3v10M3 8h10" stroke="#fff" strokeWidth="3.500" /><path d="M8 4v8M4 8h8" stroke="#3d9a38" strokeWidth="2" /></svg>
      360安全卫士
    </button>
    <button className="ml-0.5 flex h-[19px] w-[83px] items-center rounded-xs border border-[#a3c9dd] bg-linear-to-r from-[#8fbad2] to-[#5e98bd] pl-1 whitespace-nowrap">
      <Logo className="mr-0.5 size-4" />
      AutoCAD 2007 -...
    </button>
    <div className="ml-auto flex items-center gap-0.5">
      <svg viewBox="0 0 60 12" className="h-3 w-[60px]">
        <path d="M1 4h8v5H1z" fill="#b8bec4" /><path d="M2 6h6M2 8h6" stroke="#6a727a" strokeWidth=".7" />
        <path d="M15 1h3v3h-3zM13.500 2.500h3v3h-3zM14 8h3l-1.500 2z" fill="#cfe2f5" />
        <path d="M23 8h4l-2-2.500z" fill="#fff" />
        <path d="M35 10V8M37 10V7M39 10V5.500M41 10V4" stroke="#d4dce4" strokeWidth="1.200" />
        <path d="M48 4.500h1.500L52 2v8l-2.500-2.500H48z" fill="#fff" /><path d="M53.500 4c1 1 1 3 0 4" fill="none" stroke="#d4dce4" />
      </svg>
      <div className="text-center leading-[9px]"><div>8:57</div><div>2019/12/23/星期一</div></div>
      <button aria-label="显示桌面" className="ml-0.5 h-5 w-[6px] border-l border-[#5f87b3] bg-[#2a568a]" />
    </div>
  </footer>
);

const outline = '[-webkit-text-stroke:1px_#b4b4b4]';

const Watermark = () => (
  <div className="pointer-events-none absolute right-[54px] bottom-[21px] font-['Liberation_Sans','Noto_Sans_CJK_SC',sans-serif] text-white opacity-80">
    <div className="flex items-end">
      <span className={`text-[36px] leading-[36px] font-bold ${outline}`}>Bai</span>
      <div className="relative mb-0.5 ml-1">
        <svg viewBox="0 0 54 58" className="h-[58px] w-[54px]" fill="#fff" stroke="#c0c0c0">
          <ellipse cx="7" cy="23" rx="6" ry="8" /><ellipse cx="20" cy="10" rx="6" ry="9" />
          <ellipse cx="35" cy="11" rx="7" ry="9" /><ellipse cx="46" cy="26" rx="7" ry="8" />
          <path d="M27 24c8 0 10 7 15 12 6 5 9 10 5 15-5 6-13 3-20 3s-15 3-20-3c-4-5-1-10 5-15 5-5 7-12 15-12z" />
        </svg>
        <span className={`absolute inset-x-0 bottom-[6px] text-center text-[22px] leading-[22px] font-bold ${outline}`}>du</span>
      </div>
      <span className={`text-[30px] leading-[36px] font-bold ${outline}`}>经验</span>
    </div>
    <div className="text-[22px] leading-[24px] [-webkit-text-stroke:1px_#d0d0d0]">jingyan.baidu.com</div>
  </div>
);

export default function App() {
  return (
    <div className="relative flex h-screen flex-col overflow-hidden bg-[#f0f0f0] font-['DejaVu_Sans','Noto_Sans_CJK_SC',sans-serif]">
      <TitleBar />
      <MenuBar />
      <Toolbars />
      <main className="flex min-h-0 flex-1">
        <SideTools />
        <div className="flex min-w-0 flex-1 flex-col pb-px">
          <Canvas />
          <LayoutTabs />
        </div>
        <div className="w-0.5 shrink-0 bg-[#d8d8d8]" />
        <Properties />
      </main>
      <CommandLine />
      <StatusBar />
      <Taskbar />
      <div className="pointer-events-none absolute bottom-[38px] left-[44px] h-[63px] w-[295px] border-3 border-[#22ac4b]" />
      <Watermark />
    </div>
  );
}
